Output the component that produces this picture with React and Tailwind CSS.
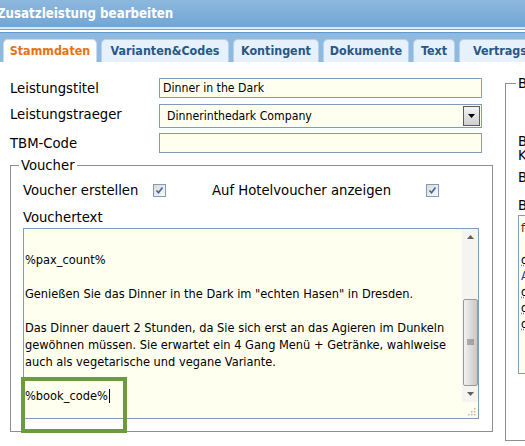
import React from 'react';

const tabs = [
  { label: 'Stammdaten', w: 'w-[94px]' },
  { label: 'Varianten&Codes', w: 'w-[128px]' },
  { label: 'Kontingent', w: 'w-[86px]' },
  { label: 'Dokumente', w: 'w-[86px]' },
  { label: 'Text', w: 'w-[42px]' },
  { label: 'Vertragsteile', w: 'w-[110px]' },
];

const voucherLines = [
  '%pax_count%',
  '',
  'Genießen Sie das Dinner in the Dark im "echten Hasen" in Dresden.',
  '',
  'Das Dinner dauert 2 Stunden, da Sie sich erst an das Agieren im Dunkeln',
  'gewöhnen müssen. Sie erwartet ein 4 Gang Menü + Getränke, wahlweise',
  'auch als vegetarische und vegane Variante.',
  '',
];

function Checkbox() {
  return (
    <span className="inline-flex h-[13px] w-[13px] items-center justify-center border border-[#7f9db9] bg-gradient-to-br from-[#dcdcd6] to-[#f8f8f6]">
      <svg width="9" height="9" viewBox="0 0 9 9">
        <path d="M1.5 4.5 L3.5 6.8 L7.5 1.5" fill="none" stroke="#4a5da8" strokeWidth="1.6" />
      </svg>
    </span>
  );
}

function Field({ children, h = 'h-[20px]' }) {
  return (
    <div className={`${h} w-[323px] border border-[#7f9db9] bg-[#fffff0] flex items-center`}>
      {children}
    </div>
  );
}

export default function App() {
  return (
    <div className="relative w-[525px] h-[446px] overflow-hidden bg-white font-['DejaVu_Sans_Condensed',Tahoma,sans-serif] text-black">
      {/* title bar */}
      <div className="h-[27px] bg-gradient-to-b from-[#8db8de] to-[#72a6d4] flex items-center">
        <span className="-ml-[3px] text-white font-bold text-[13.2px]">Zusatzleistung bearbeiten</span>
      </div>
      <div className="h-[2px] bg-[#dbe9f6]" />
      <div className="h-[1px] bg-[#6ea3d3]" />
      <div className="h-[2px] bg-white" />
      <div className="h-[1px] bg-[#5e9ad2]" />

      {/* tab strip */}
      <div className="h-[29px] bg-[#8fb9df] flex items-end gap-[4px] pl-[3px] whitespace-nowrap">
        {tabs.map((t, i) => (
          <div
            key={t.label}
            className={
              i === 0
                ? `${t.w} shrink-0 h-[23px] flex items-center justify-center rounded-t-[5px] border border-b-0 border-[#c6dbef] bg-white text-[#e8720c] font-bold text-[12.4px]`
                : `${t.w} shrink-0 h-[23px] flex items-center justify-center rounded-t-[5px] border border-b-0 border-[#b6d0ea] bg-[#e6f1fb] text-[#285787] font-bold text-[12.4px]`
            }
          >
            {t.label}
          </div>
        ))}
      </div>

      {/* content */}
      <div className="flex pl-[10px]">
        <div className="w-[483px] shrink-0 pt-[16px]">
          <div className="grid grid-cols-[149px_323px] gap-y-[6px] text-[14.7px]">
            <div className="leading-[20px]">Leistungstitel</div>
            <Field>
              <span className="pl-[3px] text-[12.2px]">Dinner in the Dark</span>
            </Field>
            <div className="leading-[20px]">Leistungstraeger</div>
            <Field h="h-[24px]">
              <span className="pl-[7px] flex-1 text-[12.2px]">Dinnerinthedark Company</span>
              <span className="mr-[1px] h-[20px] w-[17px] border border-[#5a5a5a] bg-gradient-to-b from-[#f4f4f4] to-[#cfcfcf] flex items-center justify-center">
                <svg width="7" height="4" viewBox="0 0 7 4">
                  <path d="M0 0 H7 L3.5 4 Z" fill="#000" />
                </svg>
              </span>
            </Field>
            <div className="leading-[20px] -mt-[1px]">TBM-Code</div>
            <div className="-mt-[1px]">
              <Field />
            </div>
          </div>

          {/* voucher group */}
          <fieldset className="mt-[4px] w-[483px] border border-[#8e8e8e] pl-[12px] pr-[13px] pb-[12px]">
            <legend className="-ml-[4px] px-[2px] text-[14.7px] leading-[16px]">Voucher</legend>
            <div className="flex items-center h-[22px] mt-[6px] text-[14.7px]">
              <span className="w-[130px]">Voucher erstellen</span>
              <Checkbox />
              <span className="ml-[46px] w-[214px]">Auf Hotelvoucher anzeigen</span>
              <Checkbox />
            </div>
            <div className="mt-[5px] text-[14.7px] leading-[22px]">Vouchertext</div>
            <div className="h-[191px] border border-[#7f9db9] bg-[#fffff0] flex">
              <div className="flex-1 pt-[22px] pl-[1px] text-[12.7px] leading-[17px] whitespace-pre">
                {voucherLines.map((l, i) => (
                  <div key={i} className="h-[17px]">{l}</div>
                ))}
                <div className="h-[17px] flex items-center">
                  %book_code%<span className="ml-[1px] inline-block h-[14px] w-[1px] bg-black" />
                </div>
              </div>
              {/* scrollbar */}
              <div className="w-[16px] bg-[#f4f4f0] flex flex-col items-center">
                <div className="h-[16px] flex items-center justify-center">
                  <svg width="7" height="4" viewBox="0 0 7 4"><path d="M3.5 0 L7 4 H0 Z" fill="#606060" /></svg>
                </div>
                <div className="h-[54px]" />
                <div className="h-[87px] w-[15px] rounded-[2px] border border-[#9a9a9a] bg-gradient-to-r from-[#f2f2f2] via-[#dcdcdc] to-[#c8c8c8] flex items-center justify-center">
                  <svg width="7" height="7" viewBox="0 0 7 7">
                    <path d="M0 1 H7 M0 3 H7 M0 5 H7" stroke="#707070" strokeWidth="1" />
                  </svg>
                </div>
                <div className="h-[16px] flex items-center justify-center">
                  <svg width="7" height="4" viewBox="0 0 7 4"><path d="M0 0 H7 L3.5 4 Z" fill="#606060" /></svg>
                </div>
                <div className="flex-1 w-full bg-[#fffff0] flex items-end justify-end p-[2px]">
                  <svg width="9" height="9" viewBox="0 0 9 9" fill="#b8b8b8">
                    <rect x="7" y="1" width="1.5" height="1.5" />
                    <rect x="4" y="4" width="1.5" height="1.5" />
                    <rect x="7" y="4" width="1.5" height="1.5" />
                    <rect x="1" y="7" width="1.5" height="1.5" />
                    <rect x="4" y="7" width="1.5" height="1.5" />
                    <rect x="7" y="7" width="1.5" height="1.5" />
                  </svg>
                </div>
              </div>
            </div>
          </fieldset>
        </div>

        {/* right group, cut off at the window edge */}
        <div className="ml-[12px] pt-[13px] shrink-0">
          <fieldset className="w-[200px] h-[366px] border border-[#8e8e8e] pl-[12px]">
            <legend className="-ml-[2px] px-[2px] text-[14.7px] leading-[16px]">Buchung</legend>
            <div className="mt-[43px] text-[14.7px] leading-[14px]">
              <div>Buchungs</div>
              <div>Kategorie</div>
              <div className="mt-[8px]">Beschreibung</div>
              <div className="mt-[14px]">Bemerkung</div>
            </div>
            <div className="mt-[3px] h-[159px] border border-[#7f9db9] bg-[#fffff0] pl-[2px] pt-[4px] text-[12.7px] leading-[16px]">
              <div className="text-[#7a1010]">f</div>
              <div className="h-[16px]" />
              <div className="underline decoration-dotted decoration-[#e8720c]">q</div>
              <div className="text-[#2040a0]">A</div>
              <div className="underline decoration-dotted decoration-[#e8720c]">q</div>
              <div className="underline decoration-dotted decoration-[#e8720c]">q</div>
              <div className="underline decoration-dotted decoration-[#e8720c]">q</div>
            </div>
          </fieldset>
        </div>
      </div>

      {/* highlight frame */}
      <div className="absolute left-[21px] top-[377px] w-[106px] h-[56px] border-4 border-[#6b9b3e]" />
    </div>
  );
}
